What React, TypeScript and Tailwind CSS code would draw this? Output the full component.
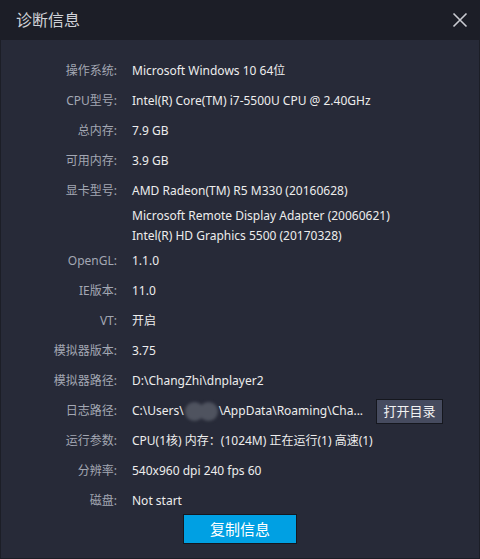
import React from "react";

const rows: { label: string; value: string[] }[] = [
  { label: "操作系统:", value: ["Microsoft Windows 10 64位"] },
  { label: "CPU型号:", value: ["Intel(R) Core(TM) i7-5500U CPU @ 2.40GHz"] },
  { label: "总内存:", value: ["7.9 GB"] },
  { label: "可用内存:", value: ["3.9 GB"] },
  {
    label: "显卡型号:",
    value: [
      "AMD Radeon(TM) R5 M330 (20160628)",
      "Microsoft Remote Display Adapter (20060621)",
      "Intel(R) HD Graphics 5500 (20170328)",
    ],
  },
  { label: "OpenGL:", value: ["1.1.0"] },
  { label: "IE版本:", value: ["11.0"] },
  { label: "VT:", value: ["开启"] },
  { label: "模拟器版本:", value: ["3.75"] },
  { label: "模拟器路径:", value: ["D:\\ChangZhi\\dnplayer2"] },
];

const rowsAfter: { label: string; value: string }[] = [
  { label: "运行参数:", value: "CPU(1核) 内存：(1024M) 正在运行(1) 高速(1)" },
  { label: "分辨率:", value: "540x960 dpi 240 fps 60" },
  { label: "磁盘:", value: "Not start" },
];

function Label({ children }: { children: React.ReactNode }) {
  return <div className="w-[116px] shrink-0 text-right text-[#a3a7b3]">{children}</div>;
}

export default function App() {
  return (
    <div
      className="w-[480px] h-[559px] flex flex-col bg-[#1c1e27] text-[12px] leading-[20px]"
      style={{ fontFamily: '"Noto Sans", "Noto Sans CJK SC", sans-serif' }}
    >
      <div className="h-[40px] shrink-0 flex items-center justify-between pl-4 pr-[12px]">
        <span className="text-[16px] text-[#d0d2d8]">诊断信息</span>
        <svg width="16" height="16" viewBox="0 0 16 16" className="text-[#c9cbd1]">
          <path d="M1.5 1.5 L14.5 14.5 M14.5 1.5 L1.5 14.5" stroke="currentColor" strokeWidth="1.6" />
        </svg>
      </div>

      <div className="flex-1 mx-px mb-px bg-[#272a38] pt-[16px] flex flex-col">
        {rows.map((r) => (
          <div key={r.label} className="flex">
            <Label>
              <div className="h-[30px] flex items-center justify-end">{r.label}</div>
            </Label>
            <div className="pl-[15px] text-[#ededed]">
              {r.value.map((v, i) => (
                <div key={v} className={i === 0 ? "h-[30px] flex items-center" : "h-[20px] flex items-center"}>
                  {v}
                </div>
              ))}
            </div>
          </div>
        ))}

        <div className="flex h-[30px] items-center">
          <Label>日志路径:</Label>
          <div className="pl-[15px] flex items-center text-[#ededed] w-[262px]">
            <span>C:\Users\</span>
            <span className="flex mx-px blur-[1.5px]">
              <span className="w-[19px] h-[19px] rounded-full bg-[#4f535f]" />
              <span className="w-[19px] h-[19px] -ml-[5px] rounded-full bg-[#4f535f]" />
            </span>
            <span className="whitespace-nowrap">\AppData\Roaming\Cha...</span>
          </div>
          <button className="h-[25px] w-[68px] ml-auto mr-[36px] bg-[#464b5f] border border-[#15171e] text-[#f2f2f2] text-[13px]">
            打开目录
          </button>
        </div>

        {rowsAfter.map((r) => (
          <div key={r.label} className="flex h-[30px] items-center">
            <Label>{r.label}</Label>
            <div className="pl-[15px] text-[#ededed] whitespace-nowrap">{r.value}</div>
          </div>
        ))}

        <div className="flex justify-center -mt-[2px]">
          <button className="w-[114px] h-[30px] bg-[#00a0e3] border border-[#15171e] text-white text-[15px]">
            复制信息
          </button>
        </div>
      </div>
    </div>
  );
}
